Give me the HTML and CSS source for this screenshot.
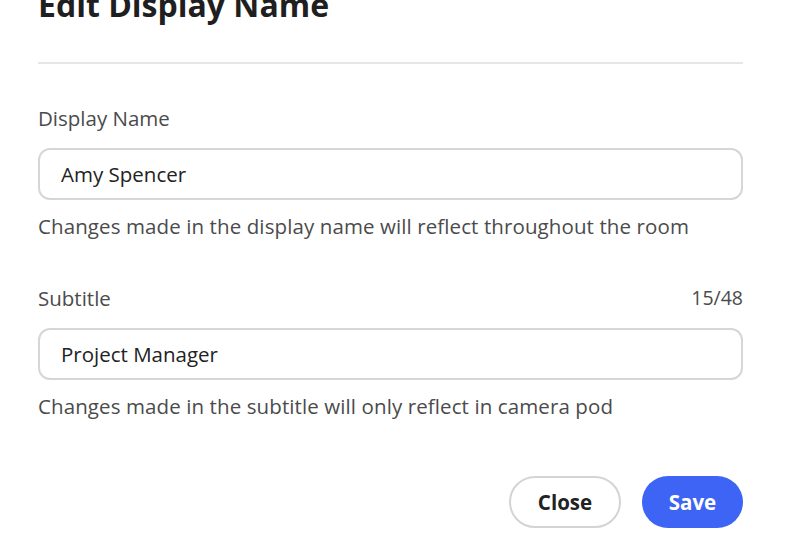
FILE: index.html
```html
<!DOCTYPE html>
<html>
<head>
<meta charset="utf-8">
<link rel="stylesheet" href="styles.css">
</head>
<body>
<div class="dialog">
  <h1 class="title">Edit Display Name</h1>
  <hr class="divider">
  <div class="field">
    <div class="label-row"><span class="label">Display Name</span></div>
    <div class="input">Amy Spencer</div>
    <div class="help">Changes made in the display name will reflect throughout the room</div>
  </div>
  <div class="field field-second">
    <div class="label-row"><span class="label">Subtitle</span><span class="count">15/48</span></div>
    <div class="input">Project Manager</div>
    <div class="help">Changes made in the subtitle will only reflect in camera pod</div>
  </div>
  <div class="actions">
    <button class="btn btn-secondary">Close</button>
    <button class="btn btn-primary">Save</button>
  </div>
</div>
</body>
</html>
```

FILE: styles.css
```css
html, body {
  margin: 0;
  padding: 0;
  background: #ffffff;
  overflow: hidden;
}
body {
  font-family: "Open Sans", "Lato", sans-serif;
  color: #222222;
}
.dialog {
  width: 705px;
  margin-left: 38px;
  display: flex;
  flex-direction: column;
}
.title {
  margin: -13px 0 0 0;
  font-size: 32px;
  line-height: 36px;
  font-weight: 700;
  color: #1f1f1f;
}
.divider {
  margin: 39px 0 0 0;
  border: 0;
  height: 2px;
  background: #e6e6e6;
}
.field {
  display: flex;
  flex-direction: column;
  margin-top: 42px;
}
.field-second {
  margin-top: 48px;
}
.label-row {
  display: flex;
  justify-content: space-between;
  font-size: 20.5px;
  line-height: 24px;
  color: #4b4b4b;
}
.count {
  font-size: 19.5px;
}
.input {
  margin-top: 18px;
  height: 48px;
  border: 2px solid #d6d6d6;
  border-radius: 12px;
  padding: 0 21px;
  display: flex;
  align-items: center;
  font-size: 20.5px;
  color: #222222;
}
.help {
  margin-top: 14px;
  font-size: 20.5px;
  line-height: 24px;
  letter-spacing: 0.1px;
  color: #4b4b4b;
}
.actions {
  display: flex;
  justify-content: flex-end;
  gap: 21px;
  margin-top: 58px;
}
.btn {
  height: 52px;
  border-radius: 26px;
  font-family: inherit;
  font-size: 20.5px;
  font-weight: 700;
  cursor: pointer;
}
.btn-secondary {
  width: 112px;
  background: #ffffff;
  border: 2px solid #d4d4d4;
  color: #222222;
}
.btn-primary {
  width: 101px;
  background: #3d64f5;
  border: 0;
  color: #ffffff;
}
```
